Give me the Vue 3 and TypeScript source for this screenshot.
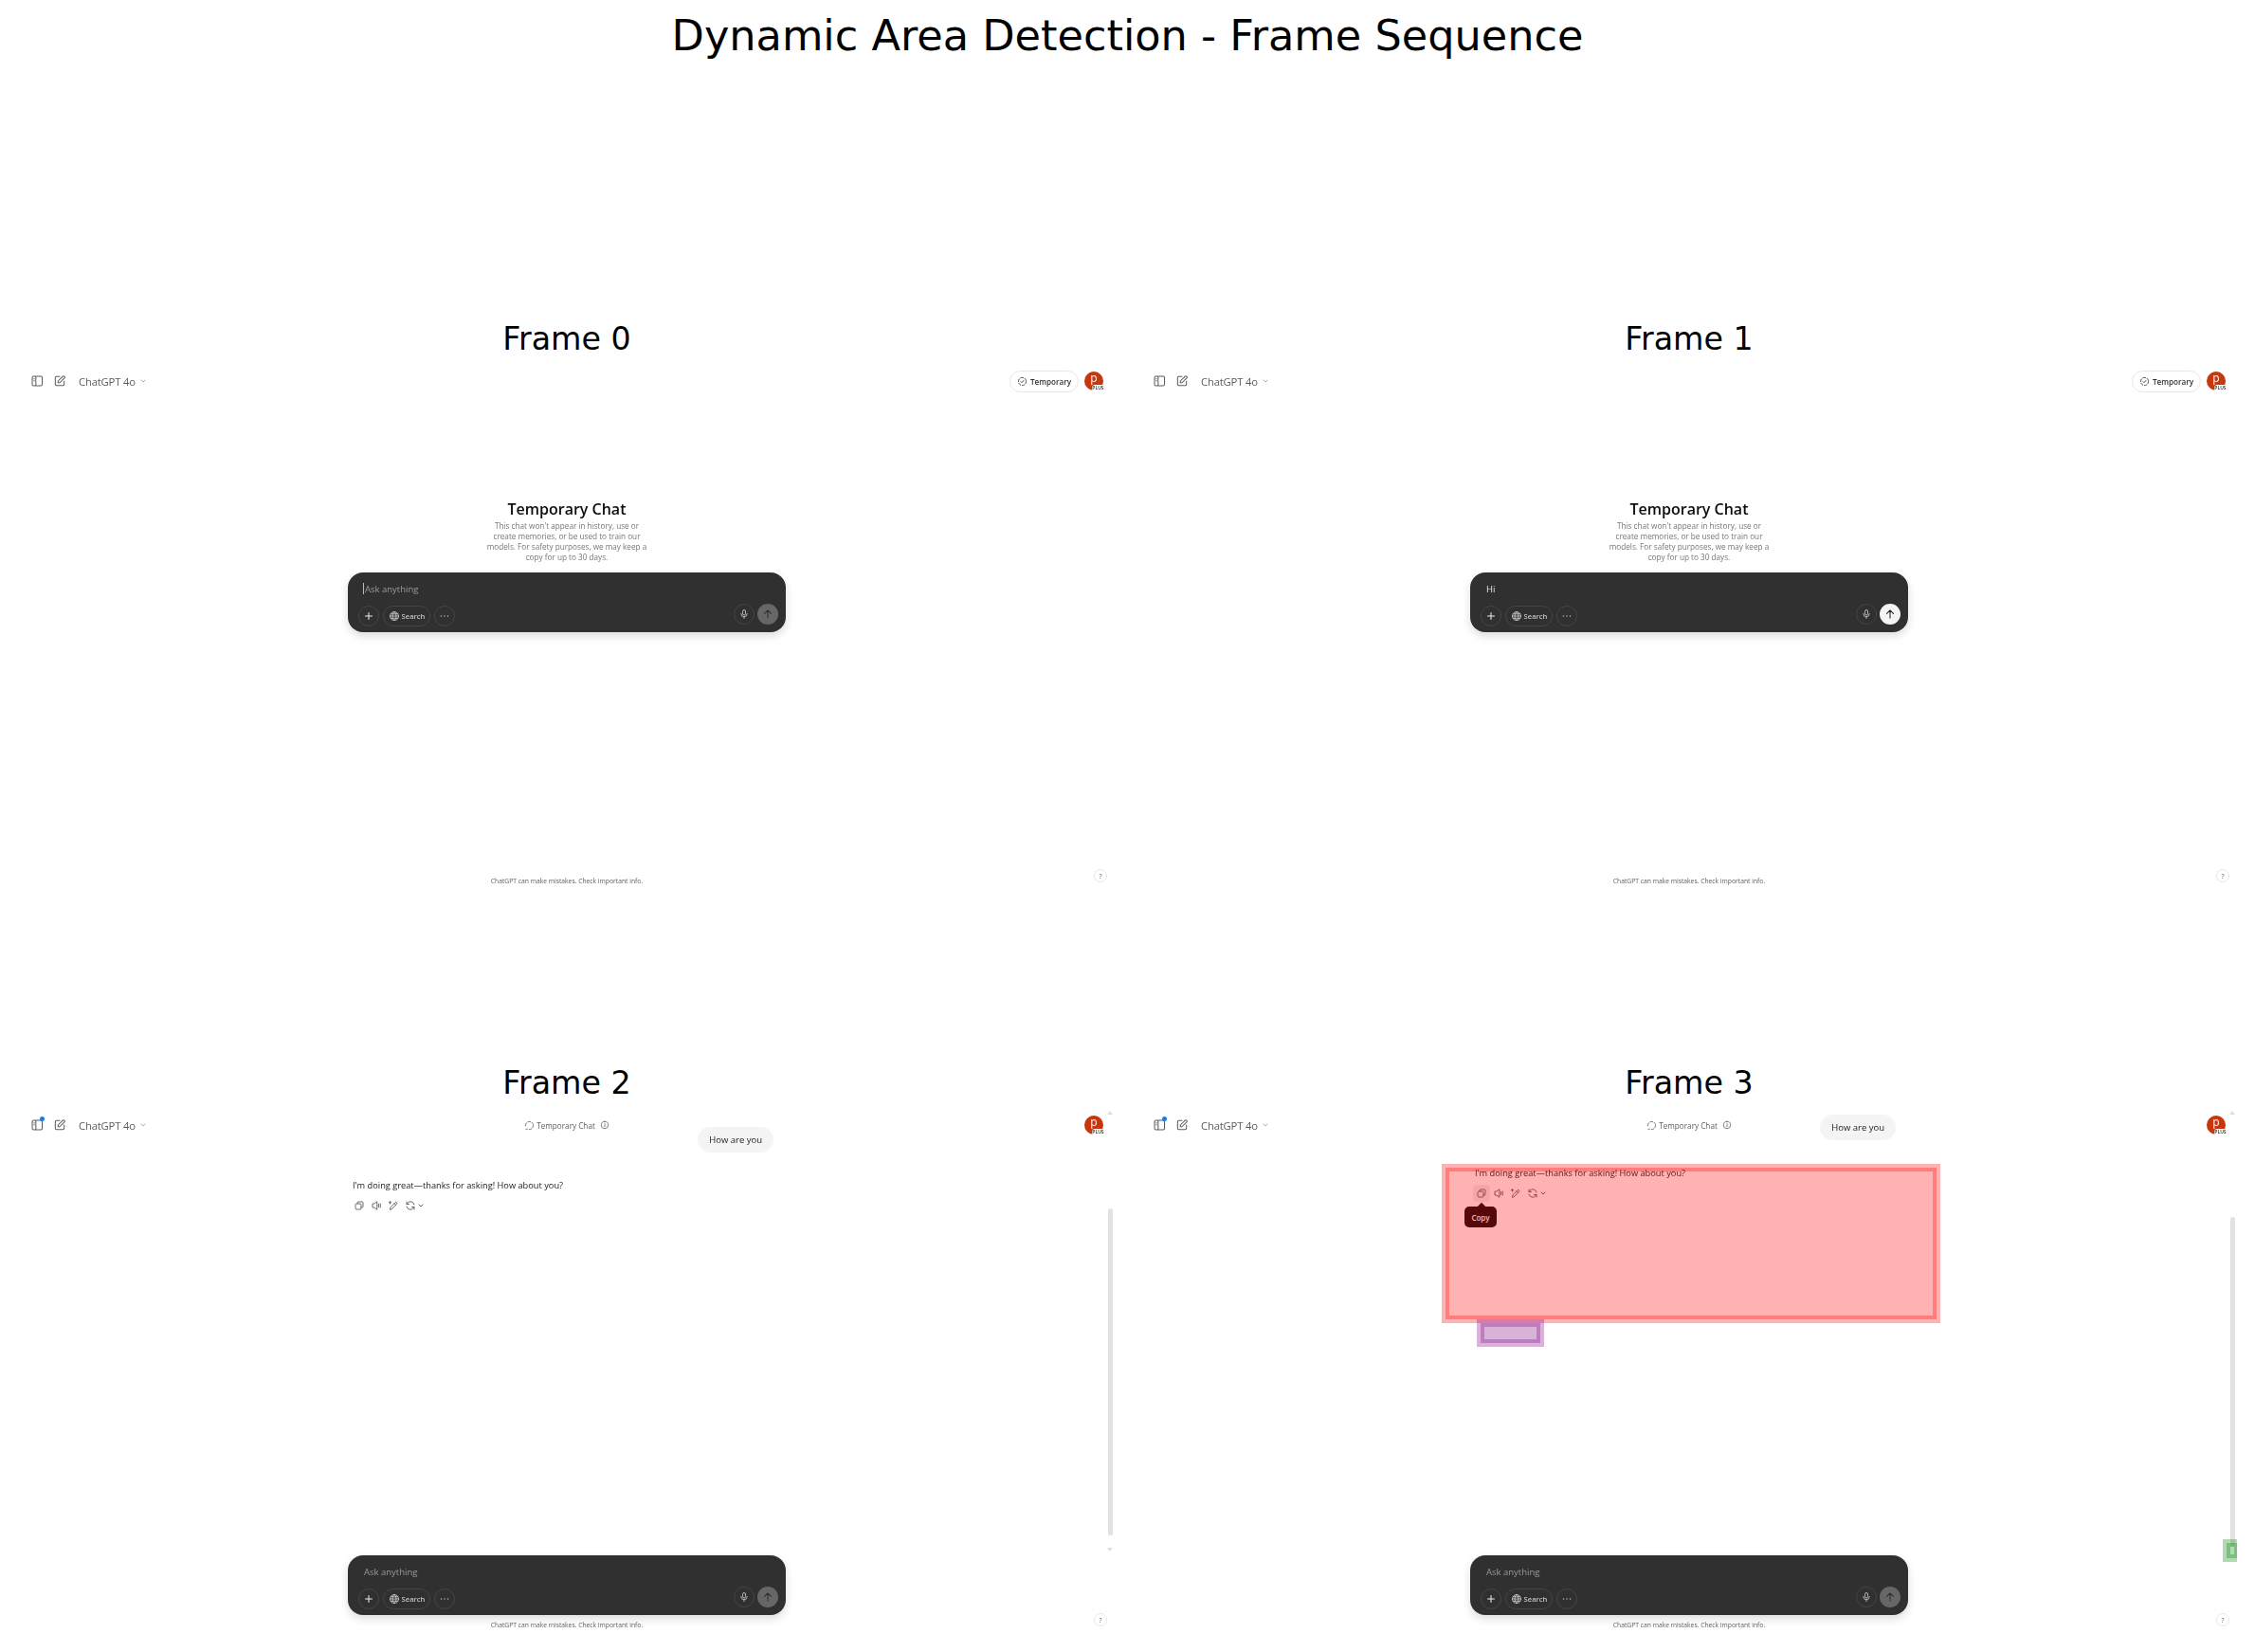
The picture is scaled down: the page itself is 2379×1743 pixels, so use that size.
<script setup lang="ts">
interface Box { id: string; tone: string; left: number; top: number; width: number; height: number }
interface Frame { n: number; chat: boolean; text: string; caret: boolean; sendOn: boolean; compact: boolean; boxes: Box[] }

const icons: Record<string, string> = {
  panel: 'M3.5 6a2.5 2.5 0 0 1 2.500-2.500h13a2.500 2.500 0 0 1 2.500 2.500v12a2.500 2.500 0 0 1-2.500 2.500H6a2.500 2.500 0 0 1-2.500-2.500zM10 3.500v17M6.500 8h.8M6.500 11.500h.8',
  compose: 'M12 4H6a2 2 0 0 0-2 2v12a2 2 0 0 0 2 2h12a2 2 0 0 0 2-2v-6M9 15v-3l8.500-8.500a2.100 2.100 0 0 1 3 3L12 15z',
  chevron: 'M6 9l6 6 6-6',
  temp: 'M9.500 3.300a9 9 0 0 1 5 0M17.700 5a9 9 0 0 1 3 4.500M21 12a9 9 0 0 1-1.700 5.200M16.700 19.700a9 9 0 0 1-5 1.300M8 20a9 9 0 0 1-4-4M3 12.500a9 9 0 0 1 1.300-5.300M6 5.500a9 9 0 0 1 1-.9M8.500 12l2.500 2.500 4.500-5',
  tempChat: 'M9.500 3.300a9 9 0 0 1 5 0M17.700 5a9 9 0 0 1 3 4.500M21 12a9 9 0 0 1-1.700 5.200M16.700 19.700a9 9 0 0 1-5 1.300M8 20a3 3 0 0 1-4 .5M3 12.500a9 9 0 0 1 1.300-5.300M6 5.500a9 9 0 0 1 1-.9',
  info: 'M12 3a9 9 0 1 1 0 18a9 9 0 1 1 0-18zM12 11v5.500M12 7.500v.3',
  plus: 'M12 5v14M5 12h14',
  globe: 'M12 3a9 9 0 1 1 0 18a9 9 0 1 1 0-18zM3 12h18M12 3c3 3 3.800 6 3.800 9s-.8 6-3.800 9c-3-3-3.800-6-3.800-9s.8-6 3.800-9M4.500 7.500h15M4.500 16.500h15',
  dots: 'M5 12h.01M12 12h.01M19 12h.01',
  mic: 'M9 6a3 3 0 0 1 6 0v5a3 3 0 0 1-6 0zM5.500 11a6.500 6.500 0 0 0 13 0M12 17.500V21',
  up: 'M12 19V5M6 11l6-6 6 6',
  copy: 'M8 8V6a2 2 0 0 1 2-2h8a2 2 0 0 1 2 2v8a2 2 0 0 1-2 2h-2M4 10a2 2 0 0 1 2-2h8a2 2 0 0 1 2 2v8a2 2 0 0 1-2 2H6a2 2 0 0 1-2-2z',
  speaker: 'M13 4L7.500 8H4v8h3.500l5.500 4zM17 9v6M20.500 8v8',
  edit: 'M5 20l1-4.500L16 5.500a2.100 2.100 0 0 1 3 3L9 19zM5 3v5M2.500 5.500h5M14 7.500l3 3',
  refresh: 'M20 10A8 8 0 0 0 6 6.500L4 9M4 4v5h5M4 14a8 8 0 0 0 14 3.500l2-2.500M20 20v-5h-5',
}

const frames: Frame[] = [
  { n: 0, chat: false, text: '', caret: true, sendOn: false, compact: false, boxes: [] },
  { n: 1, chat: false, text: 'Hi', caret: false, sendOn: true, compact: false, boxes: [] },
  { n: 2, chat: true, text: '', caret: false, sendOn: false, compact: false, boxes: [] },
  {
    n: 3, chat: true, text: '', caret: false, sendOn: false, compact: true,
    boxes: [
      { id: 'a', tone: 'red', left: 317, top: 65, width: 526, height: 168 },
      { id: 'b', tone: 'purple', left: 354, top: 229, width: 71, height: 29 },
      { id: 'c', tone: 'green', left: 1141, top: 461, width: 20, height: 24 },
    ],
  },
]

function boxStyle(b: Box) {
  return { left: b.left + 'px', top: b.top + 'px', width: b.width + 'px', height: b.height + 'px' }
}
</script>

<template>
  <div class="figure">
    <h1 class="fig-title">Dynamic Area Detection - Frame Sequence</h1>
    <div class="grid">
      <section v-for="f in frames" :key="f.n" class="frame">
        <h2 class="frame-title">Frame {{ f.n }}</h2>
        <div class="screen">
          <div class="page">
            <header class="topbar">
              <div class="top-left">
                <span class="panel-wrap">
                  <svg class="ic i13" viewBox="0 0 24 24"><path :d="icons.panel" /></svg>
                  <i v-if="f.chat" class="dot"></i>
                </span>
                <svg class="ic i13" viewBox="0 0 24 24"><path :d="icons.compose" /></svg>
                <span class="model">ChatGPT 4o</span>
                <svg class="ic i7 light" viewBox="0 0 24 24"><path :d="icons.chevron" /></svg>
              </div>
              <div class="top-mid">
                <template v-if="f.chat">
                  <svg class="ic i11" viewBox="0 0 24 24"><path :d="icons.tempChat" /></svg>
                  <span class="tc-label">Temporary Chat</span>
                  <svg class="ic i9" viewBox="0 0 24 24"><path :d="icons.info" /></svg>
                </template>
              </div>
              <div class="top-right">
                <span v-if="!f.chat" class="temp-pill">
                  <svg class="ic i11" viewBox="0 0 24 24"><path :d="icons.temp" /></svg>
                  Temporary
                </span>
                <span class="avatar">p<em class="plus">PLUS</em></span>
              </div>
            </header>

            <div v-if="!f.chat" class="intro">
              <h3 class="intro-title">Temporary Chat</h3>
              <p class="intro-text">This chat won't appear in history, use or<br />create memories, or be used to train our<br />models. For safety purposes, we may keep a<br />copy for up to 30 days.</p>
            </div>

            <div v-else class="thread" :class="{ compact: f.compact }">
              <div class="bubble">How are you</div>
              <p class="reply">I'm doing great—thanks for asking! How about you?</p>
              <div class="actions">
                <span class="act" :class="{ hover: f.compact }">
                  <svg class="ic i12" viewBox="0 0 24 24"><path :d="icons.copy" /></svg>
                  <span v-if="f.compact" class="tooltip">Copy</span>
                </span>
                <span class="act"><svg class="ic i12" viewBox="0 0 24 24"><path :d="icons.speaker" /></svg></span>
                <span class="act"><svg class="ic i12" viewBox="0 0 24 24"><path :d="icons.edit" /></svg></span>
                <span class="act wide">
                  <svg class="ic i12" viewBox="0 0 24 24"><path :d="icons.refresh" /></svg>
                  <svg class="ic i7" viewBox="0 0 24 24"><path :d="icons.chevron" /></svg>
                </span>
              </div>
            </div>

            <div class="composer">
              <div class="input" :class="{ typed: f.text }">
                <i v-if="f.caret" class="caret"></i>{{ f.text || 'Ask anything' }}
              </div>
              <div class="tools">
                <div class="tools-left">
                  <span class="round"><svg class="ic i12 bright" viewBox="0 0 24 24"><path :d="icons.plus" /></svg></span>
                  <span class="pill"><svg class="ic i10" viewBox="0 0 24 24"><path :d="icons.globe" /></svg>Search</span>
                  <span class="round"><svg class="ic i10 thick" viewBox="0 0 24 24"><path :d="icons.dots" /></svg></span>
                </div>
                <div class="tools-right">
                  <span class="round"><svg class="ic i10" viewBox="0 0 24 24"><path :d="icons.mic" /></svg></span>
                  <span class="send" :class="{ on: f.sendOn }"><svg class="ic i13 up" viewBox="0 0 24 24"><path :d="icons.up" /></svg></span>
                </div>
              </div>
            </div>

            <footer class="note">ChatGPT can make mistakes. Check important info.</footer>
            <span class="help">?</span>

            <template v-if="f.chat">
              <i class="arrow up-arrow"></i>
              <i class="thumb" :class="{ low: f.compact }"></i>
              <i v-if="!f.compact" class="arrow down-arrow"></i>
            </template>
          </div>

          <div v-for="b in f.boxes" :key="b.id" class="box" :class="b.tone" :style="boxStyle(b)"><i class="band"></i></div>
        </div>
      </section>
    </div>
  </div>
</template>

<style>
html, body { margin: 0; background: #fff; }
</style>

<style scoped>
.figure { width: 2379px; height: 1743px; background: #fff; overflow: hidden; display: flex; flex-direction: column; }
.fig-title { margin: 0; height: 338px; box-sizing: border-box; padding-top: 11px; text-align: center; font: 400 44.600px/54px "DejaVu Sans", sans-serif; color: #000; }
.grid { display: grid; grid-template-columns: 1156px 1156px; column-gap: 28px; row-gap: 173px; padding-left: 20px; }
.frame { display: flex; flex-direction: column; }
.frame-title { margin: 0; height: 40px; box-sizing: border-box; text-align: center; font: 400 33.300px/40px "DejaVu Sans", sans-serif; color: #000; }
.screen { position: relative; height: 572px; overflow: hidden; background: #fff; }
.page { position: relative; height: 100%; display: flex; flex-direction: column; font-family: "Open Sans", sans-serif; filter: blur(0.35px); }

.ic { display: block; flex: none; fill: none; stroke: currentColor; stroke-width: 1.8; stroke-linecap: round; stroke-linejoin: round; }
.i7 { width: 8px; height: 8px; stroke-width: 3; }
.i9 { width: 10px; height: 10px; }
.i10 { width: 12px; height: 12px; }
.i11 { width: 11px; height: 11px; }
.i12 { width: 12px; height: 12px; }
.i13 { width: 14px; height: 14px; }
.light { color: #aaa; }
.bright { color: #f0f0f0; stroke-width: 2; }
.thick { stroke-width: 2.8; }
.up { stroke-width: 1.8; }

.topbar { position: absolute; top: 0; left: 0; right: 0; height: 48px; display: grid; grid-template-columns: 1fr auto 1fr; align-items: center; color: #5d5d5d; z-index: 2; }
.top-left { display: flex; align-items: center; padding-left: 12px; }
.panel-wrap { position: relative; margin-right: 10px; }
.dot { position: absolute; right: -1px; top: -2px; width: 5px; height: 5px; border-radius: 50%; background: #1f7ae8; }
.model { margin-left: 13px; margin-right: 4px; font-size: 11.300px; letter-spacing: -0.2px; color: #5d5d5d; }
.top-mid { display: flex; align-items: center; gap: 2px; }
.tc-label { font-size: 8.200px; margin-right: 3px; color: #5d5d5d; }
.top-right { display: flex; align-items: center; justify-content: flex-end; gap: 6px; padding-right: 12px; }
.temp-pill { box-sizing: border-box; width: 73px; height: 23px; display: flex; align-items: center; justify-content: center; gap: 3px; border: 1px solid #e6e6e6; border-radius: 12px; font-size: 8.100px; font-weight: 600; color: #333; white-space: nowrap; }
.avatar { position: relative; width: 20px; height: 20px; border-radius: 50%; background: #c8360d; color: #fff; font: 400 12px/14px "Open Sans", sans-serif; text-align: center; }
.plus { position: absolute; right: -1px; bottom: -1px; width: 13px; height: 7px; border-radius: 3px; background: #fff; color: #222; font: 600 5px/7px "Open Sans", sans-serif; text-align: center; }

.intro { padding-top: 149px; height: 77px; display: flex; flex-direction: column; align-items: center; }
.intro-title { margin: 0; height: 22px; font-size: 16px; line-height: 20px; font-weight: 600; color: #0d0d0d; white-space: nowrap; }
.intro-text { margin: 0; font-size: 8.200px; line-height: 11px; color: #777; text-align: center; white-space: nowrap; }

.thread { flex: 1; width: 462px; margin: 0 auto; box-sizing: border-box; padding: 26px 13px 0 5px; display: flex; flex-direction: column; align-items: flex-start; }
.thread.compact { padding-top: 13px; }
.bubble { align-self: flex-end; height: 27px; box-sizing: border-box; padding: 0 12px; display: flex; align-items: center; border-radius: 14px; background: #f4f4f4; font-size: 9.500px; color: #222; }
.reply { margin: 27px 0 0; height: 16px; font-size: 9.250px; line-height: 16px; color: #222; white-space: nowrap; }
.actions { display: flex; margin: 4px 0 0 -2px; color: #5d5d5d; }
.act { position: relative; width: 18px; height: 18px; display: flex; align-items: center; justify-content: center; border-radius: 4px; }
.act.wide { width: auto; padding-left: 3px; gap: 1px; }
.act.hover { background: #f0f0f0; }
.tooltip { position: absolute; left: 50%; top: 23px; width: 34px; height: 22px; margin-left: -18px; display: flex; align-items: center; justify-content: center; border-radius: 5px; background: #0d0d0d; color: #fff; font-size: 8px; font-weight: 600; }
.tooltip::before { content: ""; position: absolute; top: -3px; left: 15px; width: 6px; height: 6px; background: #0d0d0d; transform: rotate(45deg); }

.composer { flex: none; width: 462px; height: 63px; margin: 0 auto; box-sizing: border-box; padding: 9px 8px 6px 11px; display: flex; flex-direction: column; background: #303030; border-radius: 16px; box-shadow: 0 4px 10px rgba(0, 0, 0, 0.14); color: #c4c4c4; }
.input { height: 16px; padding-left: 6px; display: flex; align-items: center; font-size: 9.500px; color: #9b9b9b; }
.input.typed { color: #e8e8e8; }
.caret { width: 1px; height: 12px; margin-left: -1px; margin-right: 1px; background: #bbb; }
.tools { flex: 1; display: flex; justify-content: space-between; margin-top: 8px; height: 24px; }
.tools-left, .tools-right { display: flex; gap: 4px; }
.tools-left { align-items: flex-end; }
.tools-right { align-items: flex-start; gap: 3px; }
.round { width: 22px; height: 22px; box-sizing: border-box; display: flex; align-items: center; justify-content: center; border: 1px solid #444; border-radius: 50%; }
.pill { width: 50px; height: 22px; box-sizing: border-box; display: flex; align-items: center; justify-content: center; gap: 2px; border: 1px solid #444; border-radius: 11px; font-size: 7.600px; font-weight: 600; white-space: nowrap; }
.send { width: 22px; height: 22px; display: flex; align-items: center; justify-content: center; border-radius: 50%; background: #676767; color: #2f2f2f; }
.send.on { background: #f4f4f4; color: #222; }

.note { flex: none; margin-top: auto; margin-bottom: 15px; height: 11px; text-align: center; font-size: 6.750px; line-height: 11px; color: #5d5d5d; }
.thread + .composer + .note { margin-top: 5px; }
.help { position: absolute; left: 1134px; top: 539px; width: 14px; height: 14px; box-sizing: border-box; display: flex; align-items: center; justify-content: center; border: 1px solid #e6e6e6; border-radius: 50%; font-size: 7px; color: #5d5d6d; }

.thumb { position: absolute; left: 1149px; top: 112px; width: 5px; height: 345px; border-radius: 3px; background: #e2e2e2; }
.thumb.low { top: 121px; height: 347px; }
.arrow { position: absolute; left: 1148px; width: 0; height: 0; border-left: 3.500px solid transparent; border-right: 3.500px solid transparent; }
.up-arrow { top: 9px; border-bottom: 4px solid #ddd; }
.down-arrow { top: 470px; border-top: 4px solid #ddd; }

.box { position: absolute; z-index: 3; }
.band { position: absolute; inset: 4px; box-sizing: border-box; border: 4px solid; }
.red { background: rgba(255, 0, 0, 0.3); }
.red .band { border-color: rgba(255, 0, 0, 0.3); }
.purple { background: rgba(128, 0, 128, 0.3); }
.purple .band { border-color: rgba(128, 0, 128, 0.3); }
.green { background: rgba(0, 128, 0, 0.3); }
.green .band { border-color: rgba(0, 128, 0, 0.3); }
</style>
